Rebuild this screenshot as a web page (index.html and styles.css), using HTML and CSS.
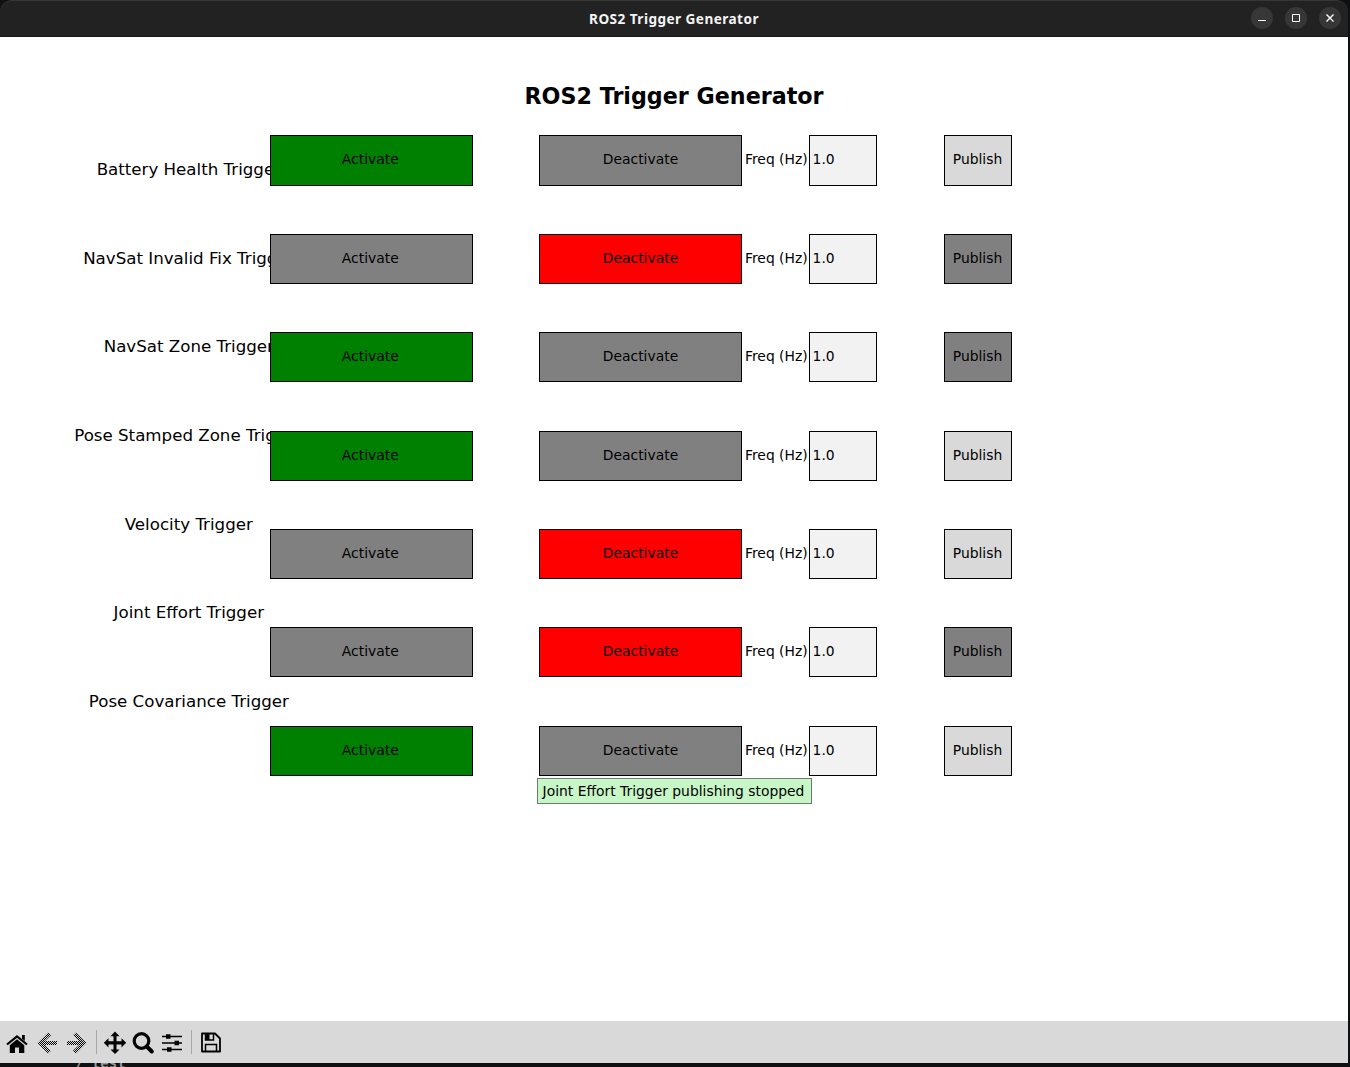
FILE: index.html
```html
<!DOCTYPE html>
<html lang="en">
<head>
<meta charset="utf-8">
<title>ROS2 Trigger Generator</title>
<link rel="stylesheet" href="styles.css">
</head>
<body>
<div class="window">
  <header class="titlebar">
    <span class="titlebar-text">ROS2 Trigger Generator</span>
    <div class="window-buttons">
      <span class="wb"><svg width="22" height="22"><path d="M7 13.5h8" stroke="#fff" fill="none"/></svg></span>
      <span class="wb"><svg width="22" height="22"><path d="M7.500 7.500h7v7h-7z" stroke="#fff" fill="none"/></svg></span>
      <span class="wb"><svg width="22" height="22"><path d="M7.500 7.500l7 7M14.500 7.500l-7 7" stroke="#fff" stroke-width="1.400" fill="none"/></svg></span>
    </div>
  </header>
  <main class="figure">
    <h1 class="title">ROS2 Trigger Generator</h1>
    <div class="panel">
      <div class="labels">
        <div class="label">Battery Health Trigger</div>
        <div class="label">NavSat Invalid Fix Trigger</div>
        <div class="label">NavSat Zone Trigger</div>
        <div class="label">Pose Stamped Zone Trigger</div>
        <div class="label">Velocity Trigger</div>
        <div class="label">Joint Effort Trigger</div>
        <div class="label">Pose Covariance Trigger</div>
      </div>
      <div class="controls">
        <div class="row"><div class="btn act green">Activate</div><div class="btn deact gray">Deactivate</div><div class="freq">Freq (Hz)</div><div class="field">1.0</div><div class="btn light">Publish</div></div>
        <div class="row"><div class="btn act gray">Activate</div><div class="btn deact red">Deactivate</div><div class="freq">Freq (Hz)</div><div class="field">1.0</div><div class="btn gray">Publish</div></div>
        <div class="row"><div class="btn act green">Activate</div><div class="btn deact gray">Deactivate</div><div class="freq">Freq (Hz)</div><div class="field">1.0</div><div class="btn gray">Publish</div></div>
        <div class="row"><div class="btn act green">Activate</div><div class="btn deact gray">Deactivate</div><div class="freq">Freq (Hz)</div><div class="field">1.0</div><div class="btn light">Publish</div></div>
        <div class="row"><div class="btn act gray">Activate</div><div class="btn deact red">Deactivate</div><div class="freq">Freq (Hz)</div><div class="field">1.0</div><div class="btn light">Publish</div></div>
        <div class="row"><div class="btn act gray">Activate</div><div class="btn deact red">Deactivate</div><div class="freq">Freq (Hz)</div><div class="field">1.0</div><div class="btn gray">Publish</div></div>
        <div class="row"><div class="btn act green">Activate</div><div class="btn deact gray">Deactivate</div><div class="freq">Freq (Hz)</div><div class="field">1.0</div><div class="btn light">Publish</div></div>
      </div>
    </div>
    <div class="status">Joint Effort Trigger publishing stopped</div>
  </main>
  <footer class="toolbar">
    <svg class="tools" width="240" height="42" viewBox="0 0 240 42">
      <defs>
        <pattern id="stipple" width="2" height="2" patternUnits="userSpaceOnUse"><path d="M0 0h1v1H0zM1 1h1v1H1z" shape-rendering="crispEdges"/></pattern>
      </defs>
      <path d="M7 23.500L17 15.300l10 8.200" fill="none" stroke="#000" stroke-width="2.200"/>
      <path d="M22 14h2.800v6L22 17.700zM17 18.200l7.300 6V32H19v-5.500h-4V32H9.800v-7.800z"/>
      <path d="M37.500 22L48 11.500l3 2.700L45 20h12v4H45l6 5.800-3 2.700z" fill="url(#stipple)"/>
      <path d="M86.500 22L76 11.500l-3 2.700L79 20H67v4h12l-6 5.800 3 2.700z" fill="url(#stipple)"/>
      <path d="M96.500 9v24M191.500 9v24" stroke="#a8a8a8" fill="none"/>
      <path d="M115 10.500l4.500 4.700h-3v5h5v-3l4.700 4.600-4.700 4.600v-3h-5v5h3L115 33l-4.500-4.600h3v-5h-5v3l-4.700-4.600 4.700-4.600v3h5v-5h-3z"/>
      <circle cx="141.500" cy="20" r="7.300" fill="none" stroke="#000" stroke-width="3.200"/>
      <path d="M146.800 25.500l5 5" stroke="#000" stroke-width="4" stroke-linecap="round"/>
      <path d="M162 15.500h20M162 22h20M162 28.500h20" stroke="#000" stroke-width="1.600"/>
      <path d="M166 13.200h4.500v4.500H166zM174.500 19.700h4.500v4.500h-4.500zM167 26.200h4.500v4.500H167z"/>
      <path d="M202 12.500h13l5 5v13h-18z" fill="none" stroke="#000" stroke-width="1.800" stroke-linejoin="round"/>
      <path d="M205.500 30.500v-7h11v7M205.500 12.500V19h8v-6.500" fill="none" stroke="#000" stroke-width="1.500"/>
      <path d="M205.500 12.500h4V19h-4z"/>
    </svg>
  </footer>
</div>
<div class="terminal">/ test</div>
</body>
</html>
```
FILE: styles.css
```css
* { box-sizing: border-box; }
html, body { margin: 0; height: 100%; }
body {
  background: #0e1011;
  font-family: "DejaVu Sans", sans-serif;
  font-size: 13.89px;
  color: #000;
  overflow: hidden;
}
.window {
  width: 1348px;
  height: 1063px;
  display: flex;
  flex-direction: column;
}
.titlebar {
  height: 37px;
  background: #222;
  border-top: 1px solid #363636;
  border-bottom: 1px solid #171717;
  border-radius: 12px 12px 0 0;
  display: grid;
  grid-template-columns: 1fr auto 1fr;
  align-items: center;
}
.titlebar-text {
  grid-column: 2;
  font: bold 13.6px "Noto Sans", sans-serif;
  letter-spacing: 0.45px;
  color: #f4f4f4;
}
.window-buttons {
  display: flex;
  justify-content: flex-end;
  gap: 12px;
  padding: 0 7px 1px 0;
}
.wb {
  width: 22px;
  height: 22px;
  border-radius: 50%;
  background: #373737;
}
.wb svg { display: block; }
.figure {
  flex: 1;
  background: #fff;
}
.title {
  margin: 0;
  padding-top: 46px;
  height: 98.4px;
  font-size: 22.22px;
  line-height: 26px;
  text-align: center;
}
.panel {
  display: flex;
  height: 642px;
}
.labels {
  width: 162px;
  margin-left: 108px;
  padding: 21px 0.4px 0 0;
}
.label {
  height: 88.56px;
  display: flex;
  justify-content: center;
  font-size: 16.67px;
  line-height: 28px;
  white-space: nowrap;
}
.controls {
  z-index: 1;
  display: flex;
  flex-direction: column;
  gap: 48.2px;
}
.row {
  height: 50.2px;
  display: grid;
  grid-template-columns: 203px 66px 203px 67px 68px 67px 68px;
}
.row > :nth-child(2) { grid-column: 3; }
.row > :nth-child(5) { grid-column: 7; }
.btn, .field {
  border: 1px solid #000;
  display: flex;
  align-items: center;
  justify-content: center;
  padding: 0 1px 2px 0;
}
.act { padding-right: 2.4px; }
.deact { padding-right: 0; }
.green { background: #008000; }
.red { background: #f00; }
.gray { background: #808080; }
.light { background: #d9d9d9; }
.freq {
  display: flex;
  align-items: center;
  padding: 0 0 2px 3px;
  white-space: nowrap;
}
.field {
  background: #f2f2f2;
  justify-content: flex-start;
  padding-left: 2.6px;
}
.status {
  width: 275px;
  height: 26px;
  margin: 0.6px 0 0 537px;
  padding-right: 2px;
  border: 1px solid #6f7b6f;
  background: #c7f6c7;
  line-height: 24px;
  text-align: center;
  white-space: nowrap;
}
.toolbar {
  height: 42px;
  background: #d9d9d9;
}
.tools { display: block; }
.terminal {
  height: 4px;
  padding-left: 75px;
  overflow: hidden;
  font: bold 14px/0px "DejaVu Sans Mono", monospace;
  color: #999;
}
```
